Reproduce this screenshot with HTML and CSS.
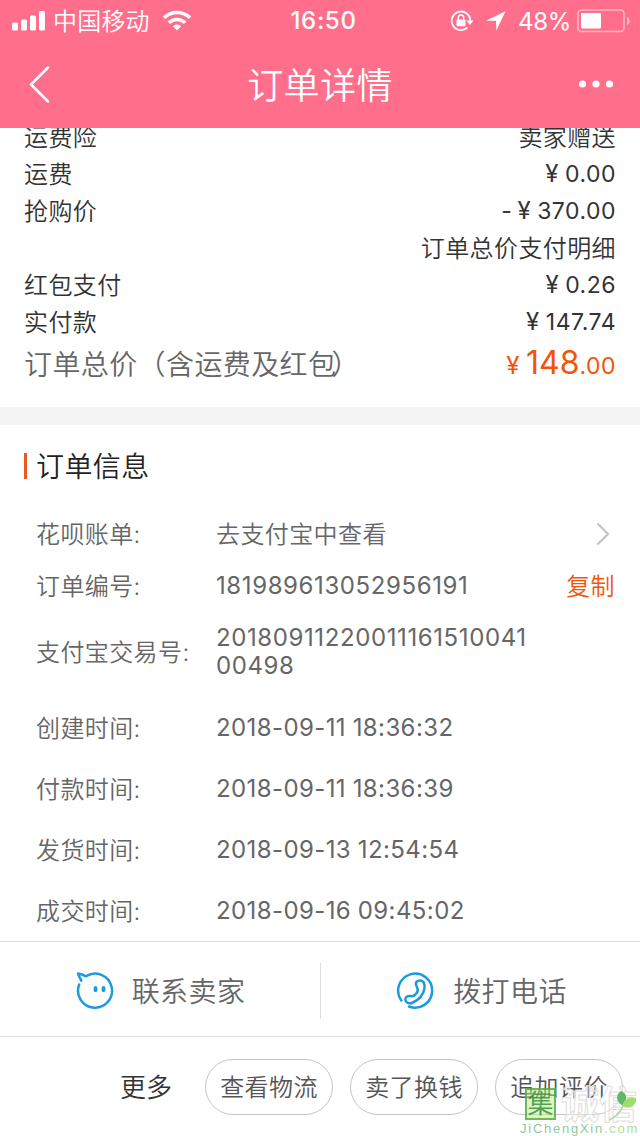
FILE: index.html
```html
<!DOCTYPE html>
<html lang="zh-CN">
<head>
<meta charset="utf-8">
<title>订单详情</title>
<link rel="stylesheet" href="styles.css">
</head>
<body>
<div class="screen">
  <header class="header">
    <div class="status">
      <div class="status-left">
        <svg class="signal" width="34" height="20" viewBox="0 0 34 20" fill="#fff"><rect x="0" y="11.500" width="6" height="8" rx="1.500"/><rect x="9" y="8.500" width="6" height="11" rx="1.500"/><rect x="18" y="4.500" width="6" height="15" rx="1.500"/><rect x="27" y="0" width="6" height="19.500" rx="1.500"/></svg>
        <span class="carrier">中国移动</span>
        <svg class="wifi" width="30" height="22" viewBox="0 0 30 22" fill="none" stroke="#fff" stroke-width="3.600"><path d="M2 7.800A18.500 18.500 0 0 1 28 7.800"/><path d="M6.800 12.800A11.800 11.800 0 0 1 23.200 12.800"/><path d="M15 20.500L10.800 16.300A6 6 0 0 1 19.200 16.300Z" fill="#fff" stroke="none"/></svg>
      </div>
      <span class="clock">16:50</span>
      <div class="status-right">
        <svg width="24" height="22" viewBox="0 0 24 22" fill="none"><path d="M17.500 17.500A9.300 9.300 0 1 1 20.300 11" stroke="#fff" stroke-width="1.800"/><path d="M16.400 10.500H23.400L19.900 15Z" fill="#fff"/><rect x="6.500" y="9.500" width="9" height="6.800" rx=".8" fill="#fff"/><path d="M8.300 10V7.800a2.700 2.700 0 0 1 5.400 0V10" stroke="#fff" stroke-width="1.500"/></svg>
        <svg class="locate" width="20" height="20" viewBox="0 0 20 20" fill="#fff"><path d="M19.500.3L0 9.700H10L10.400 19.500Z"/></svg>
        <span class="percent">48%</span>
        <svg class="battery" width="53" height="24" viewBox="0 0 53 24"><rect x="1" y="1" width="46" height="21.500" rx="3.500" fill="none" stroke="#fff" stroke-opacity=".5" stroke-width="1.600"/><rect x="4" y="4" width="20" height="15.500" rx="1" fill="#fff"/><path d="M50 8C53.500 9 53.500 15 50 16Z" fill="#fff" fill-opacity=".5"/></svg>
      </div>
    </div>
    <div class="nav">
      <svg class="back" width="22" height="38" viewBox="0 0 22 38" fill="none" stroke="#fff" stroke-width="2.500" stroke-linecap="round" stroke-linejoin="round"><path d="M20 2.500L3 19.500L20 36.500"/></svg>
      <h1 class="nav-title">订单详情</h1>
      <svg class="more-dots" width="36" height="8" viewBox="0 0 36 8" fill="#fff"><circle cx="4.500" cy="4" r="3.600"/><circle cx="18" cy="4" r="3.600"/><circle cx="31.500" cy="4" r="3.600"/></svg>
    </div>
  </header>

  <main class="content">
    <section class="costs">
      <div class="cost"><span>运费险</span><span>卖家赠送</span></div>
      <div class="cost"><span>运费</span><span class="money"><i class="yen">¥</i>0.00</span></div>
      <div class="cost"><span>抢购价</span><span class="money">-<i class="yen minus">¥</i>370.00</span></div>
      <div class="cost"><span></span><span>订单总价支付明细</span></div>
      <div class="cost"><span>红包支付</span><span class="money"><i class="yen">¥</i>0.26</span></div>
      <div class="cost"><span>实付款</span><span class="money"><i class="yen">¥</i>147.74</span></div>
      <div class="cost total"><span>订单总价（含运费及红包<span class="paren">）</span></span><span class="money total-money"><i class="yen">¥</i><b class="big">148</b>.00</span></div>
    </section>

    <section class="info">
      <h2 class="info-title">订单信息</h2>
      <div class="row"><span class="label">花呗账单:</span><span class="value link">去支付宝中查看</span><svg width="14" height="24" viewBox="0 0 14 24" fill="none" stroke="#c7c7c7" stroke-width="2.400"><path d="M1.500 1.500L12 12L1.500 22.500"/></svg></div>
      <div class="row"><span class="label">订单编号:</span><span class="value num">181989613052956191</span><span class="copy">复制</span></div>
      <div class="row trade"><span class="label">支付宝交易号:</span><span class="value num">20180911220011161510041<br>00498</span></div>
      <div class="row time"><span class="label">创建时间:</span><span class="value num">2018-09-11 18:36:32</span></div>
      <div class="row time"><span class="label">付款时间:</span><span class="value num">2018-09-11 18:36:39</span></div>
      <div class="row time"><span class="label">发货时间:</span><span class="value num">2018-09-13 12:54:54</span></div>
      <div class="row time"><span class="label">成交时间:</span><span class="value num">2018-09-16 09:45:02</span></div>
    </section>
  </main>

  <div class="contact">
    <div class="contact-item">
      <svg width="40" height="40" viewBox="0 0 40 40" fill="none" stroke="#1c9ae0" stroke-width="2.500" stroke-linecap="round" stroke-linejoin="round"><path d="M4.200 13.500A17 17 0 1 0 11 5.300C8.500 4 5.800 3 3 2.500C3.600 4.700 5 6.800 6.300 9.600"/><path d="M20.500 17v2.200M28.500 17v2.200" stroke-width="3.800"/></svg>
      <span class="contact-label">联系卖家</span>
    </div>
    <div class="contact-item call">
      <svg width="40" height="40" viewBox="0 0 40 40" fill="none" stroke="#1c9ae0" stroke-width="2.500" stroke-linecap="round" stroke-linejoin="round"><path d="M5.300 29.500A17 17 0 1 1 13 35.500"/><path d="M20.500 15C18.800 11.500 21 9.300 24.500 9.500C28 10 28.900 13.500 28.400 17.500C27.500 24 22.500 29 16 32C12.500 33.200 9.300 31.200 9.300 28.500C9.300 25.500 12.500 24.300 15.500 25.300C19.500 25 23 20 21.300 17.200C21.200 16.300 20.800 15.600 20.500 15Z"/></svg>
      <span class="contact-label">拨打电话</span>
    </div>
  </div>

  <footer class="actions">
    <span class="more">更多</span>
    <span class="pill">查看物流</span>
    <span class="pill">卖了换钱</span>
    <span class="pill">追加评价</span>
  </footer>

  <div class="watermark">
    <div class="mark-row">
      <span class="mark-seal">集</span><span class="mark-outline">诚信</span>
      <svg class="leaf" width="28" height="32" viewBox="0 0 28 32"><path d="M14 16C7 12 6 5 12 1C18 3 19 10 14 16Z" fill="#62b866"/><path d="M13 16C15 9 20 6 27 8C28 15 21 20 13 16Z" fill="#a3dc6c"/><path d="M14 15C12 22 7 27 0 30" fill="none" stroke="#a5d8a0" stroke-width="1.500"/></svg>
    </div>
    <div class="mark-url">JiChengXin<span>.com</span></div>
  </div>
</div>
</body>
</html>
```
FILE: styles.css
```css
* { box-sizing: border-box; }

body {
  margin: 0;
  background: #fff;
  font-family: Inter, "Noto Sans CJK SC", sans-serif;
  font-weight: 350;
}

svg { display: block; flex: none; }
h1, h2 { margin: 0; font-weight: 350; }
i { font-style: normal; }
b { font-weight: inherit; }

.screen {
  position: relative;
  width: 640px;
  height: 1136px;
  overflow: hidden;
  display: flex;
  flex-direction: column;
  white-space: nowrap;
}

.header {
  position: relative;
  z-index: 1;
  flex: none;
  height: 128px;
  background: #ff6e8a;
  color: #fff;
}

.status {
  height: 40px;
  display: grid;
  grid-template-columns: 1fr auto 1fr;
  align-items: center;
  padding: 0 12px;
}
.status-left, .status-right { display: flex; align-items: center; }
.status-right { justify-content: flex-end; }
.carrier { margin-left: 7px; padding-top: 2px; font-size: 24px; line-height: 40px; letter-spacing: .2px; }
.wifi { margin-left: 12px; }
.clock { padding: 0 0 1px 7px; font-size: 24px; font-weight: 550; letter-spacing: .7px; }
.locate { margin-left: 12px; }
.percent { margin-left: 12px; font-size: 24px; font-weight: 400; letter-spacing: -.3px; }
.battery { margin: 0 -2px 0 6px; }

.nav {
  height: 88px;
  display: flex;
  align-items: center;
  justify-content: space-between;
  padding: 0 26px 0 28px;
}
.nav-title { padding: 4px 0 0 12px; font-size: 36px; line-height: 84px; letter-spacing: .4px; }

.content { flex: none; height: 813px; overflow: hidden; }

.costs {
  display: flex;
  flex-direction: column;
  justify-content: flex-end;
  height: 279px;
  padding: 0 24px 17px;
}
.cost {
  flex: none;
  display: flex;
  justify-content: space-between;
  height: 37px;
  line-height: 37px;
  font-size: 24px;
  letter-spacing: .4px;
  color: #333;
}
.money { font-weight: 400; font-size: 23px; line-height: 36px; letter-spacing: .5px; }
.yen { margin-right: 6px; font-size: 24px; line-height: 1; }
.minus { margin-left: 5px; }
.total { height: 49px; line-height: 49px; font-size: 28px; color: #666; }
.paren { margin-left: -5px; }
.total-money { line-height: 44px; color: #f25409; }
.big { font-size: 32px; letter-spacing: 0; }

.info { border-top: 18px solid #f3f3f3; padding: 0 25px 0 36px; }
.info-title {
  position: relative;
  height: 83px;
  line-height: 84px;
  font-size: 28px;
  letter-spacing: .4px;
  color: #222;
}
.info-title::before {
  content: "";
  position: absolute;
  left: -12px;
  top: 28px;
  width: 3px;
  height: 26px;
  background: #e35d21;
}
.row {
  display: grid;
  grid-template-columns: 180px 1fr auto;
  align-items: center;
  height: 52px;
  font-size: 24px;
  letter-spacing: .4px;
  color: #666;
}
.row svg { margin-right: 5px; }
.label, .link, .copy { padding-bottom: 3px; }
.num { font-weight: 400; font-size: 24px; line-height: 28px; letter-spacing: .6px; }
.copy { color: #f25409; }
.trade { height: 80px; margin-bottom: 5px; }
.time { height: 61px; }
.time .num { letter-spacing: .4px; word-spacing: -.5px; }

.contact {
  flex: none;
  height: 96px;
  display: grid;
  grid-template-columns: 1fr 1fr;
  border-top: 1px solid #ddd;
  border-bottom: 1px solid #ddd;
  padding: 21px 0 17px;
}
.contact-item {
  display: flex;
  align-items: center;
  justify-content: center;
  gap: 17px;
  font-size: 28px;
  letter-spacing: .4px;
  color: #666;
}
.contact-label { padding-bottom: 3px; }
.call { border-left: 1px solid #ddd; padding-left: 2px; }

.actions {
  flex: 1;
  display: flex;
  align-items: center;
  justify-content: flex-end;
  gap: 17px;
  padding: 0 17px 0 0;
}
.more { margin-right: 16px; padding-bottom: 2px; font-size: 26px; color: #333; }
.pill {
  width: 128px;
  height: 56px;
  line-height: 56px;
  border: 1px solid #c4c4c4;
  border-radius: 28px;
  text-align: center;
  font-size: 24px;
  letter-spacing: .4px;
  color: #555;
}

/* Site watermark laid over the action bar */
.watermark { position: absolute; left: 520px; bottom: 0; width: 120px; height: 50px; }
.mark-row { display: flex; height: 36px; padding-left: 5px; }
.mark-seal {
  display: flex;
  justify-content: center;
  width: 31px;
  height: 32px;
  margin-top: 2px;
  border: 2px solid rgba(70, 165, 60, .75);
  background: rgba(190, 235, 130, .5);
  color: rgba(55, 145, 65, .85);
  font-size: 26px;
  font-weight: 400;
  line-height: 27px;
}
.mark-outline {
  margin-left: 5px;
  font-size: 38px;
  font-weight: 700;
  line-height: 36px;
  color: rgba(255, 255, 255, .4);
  -webkit-text-stroke: 1px #dedede;
}
.leaf { position: absolute; left: 89px; top: 4px; }
.mark-url {
  font-family: "Liberation Sans", sans-serif;
  font-size: 13px;
  font-weight: 400;
  line-height: 14px;
  letter-spacing: 1.75px;
  color: #8dc9a0;
}
.mark-url span { color: #b5dc91; }
```
